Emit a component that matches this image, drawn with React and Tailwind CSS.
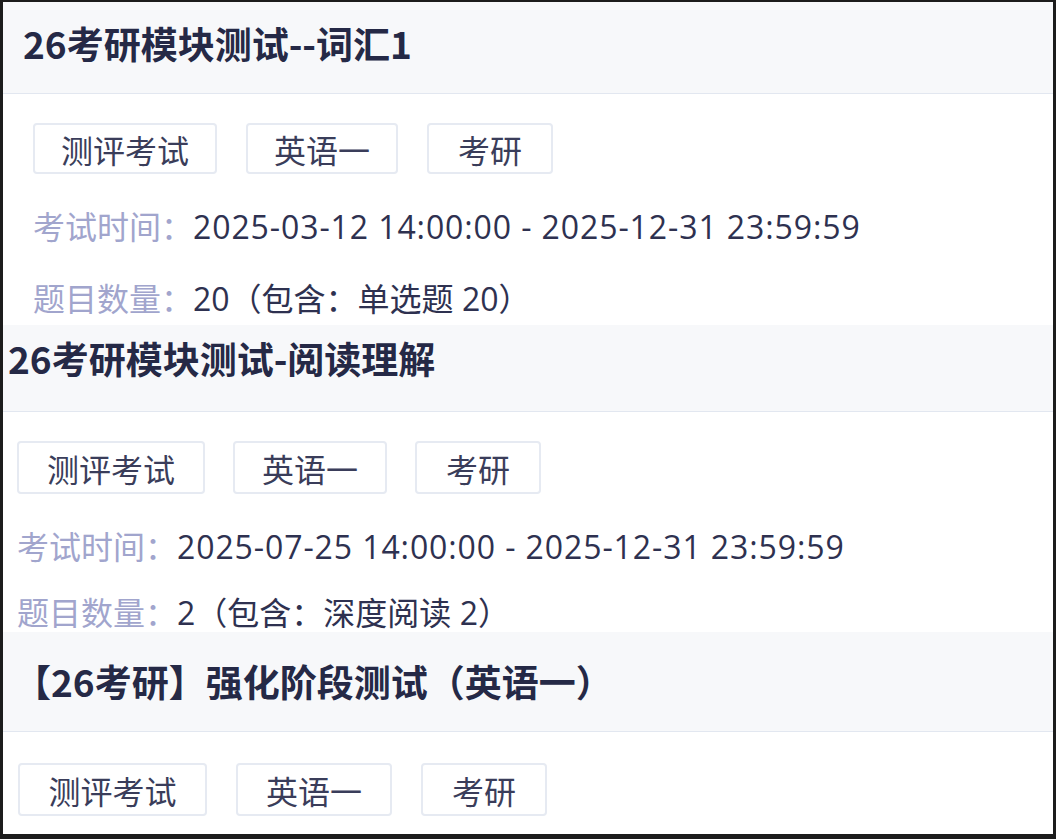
import React from "react";

const sections = [
  {
    title: "26考研模块测试--词汇1",
    header: "h-[92px] pl-[20px] pt-[17px]",
    body: "h-[231px] pl-[30px] pt-[29px]",
    tagRow: "gap-[29px]",
    tags: ["w-[184px]", "w-[152px]", "w-[126px]"],
    tagH: "h-[51px]",
    timeGap: "mt-[31px]",
    countGap: "mt-[32px]",
    time: "2025-03-12 14:00:00 - 2025-12-31 23:59:59",
    count: "20（包含：单选题 20）",
  },
  {
    title: "26考研模块测试-阅读理解",
    header: "h-[87px] pl-[5px] pt-[9px]",
    body: "h-[220px] pl-[14px] pt-[29px]",
    tagRow: "gap-[28px]",
    tags: ["w-[188px]", "w-[154px]", "w-[126px]"],
    tagH: "h-[53px]",
    timeGap: "mt-[31px]",
    countGap: "mt-[26px]",
    time: "2025-07-25 14:00:00 - 2025-12-31 23:59:59",
    count: "2（包含：深度阅读 2）",
  },
  {
    title: "【26考研】强化阶段测试（英语一）",
    header: "h-[100px] pl-[11px] pt-[25px]",
    body: "h-[102px] pl-[15px] pt-[31px]",
    tagRow: "gap-[29px]",
    tags: ["w-[189px]", "w-[156px]", "w-[126px]"],
    tagH: "h-[53px]",
    time: null,
  },
];

const tagNames = ["测评考试", "英语一", "考研"];

function Section({ s }) {
  return (
    <section>
      <div className={`flex items-start border-b border-[#e2e7f0] bg-[#f7f8fa] ${s.header}`}>
        <h2 className="text-[37px] font-bold leading-[48px] text-[#252946]">{s.title}</h2>
      </div>
      <div className={`bg-white ${s.body}`}>
        <div className={`flex ${s.tagRow}`}>
          {s.tags.map((w, i) => (
            <span
              key={i}
              className={`flex items-center justify-center rounded-[4px] border-2 border-[#e6eaf2] text-[32px] text-[#3a3d5a] ${w} ${s.tagH}`}
            >
              {tagNames[i]}
            </span>
          ))}
        </div>
        {s.time && (
          <>
            <p className={`text-[32px] leading-[40px] ${s.timeGap}`}>
              <span className="text-[#a1a5cd]">考试时间：</span>
              <span className="font-['Open_Sans','Noto_Sans_CJK_SC',sans-serif] tracking-[0.9px] text-[#2e3150]">
                {s.time}
              </span>
            </p>
            <p className={`text-[32px] leading-[36px] ${s.countGap}`}>
              <span className="text-[#a1a5cd]">题目数量：</span>
              <span className="font-['Open_Sans','Noto_Sans_CJK_SC',sans-serif] text-[#2e3150]">
                {s.count}
              </span>
            </p>
          </>
        )}
      </div>
    </section>
  );
}

export default function App() {
  return (
    <div className="h-[839px] w-full overflow-hidden border-x-[3px] border-t-[2px] border-b-[5px] border-[#1c1c1c] bg-white font-['Noto_Sans_CJK_SC',sans-serif]">
      {sections.map((s, i) => (
        <Section key={i} s={s} />
      ))}
    </div>
  );
}
